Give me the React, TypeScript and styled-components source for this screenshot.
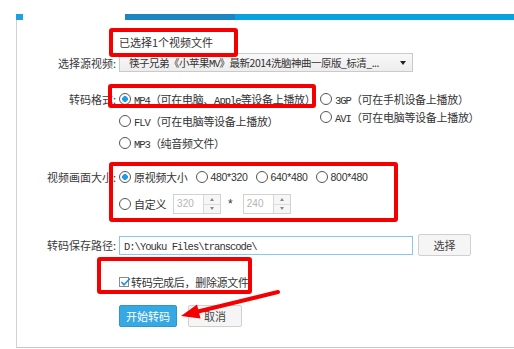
import styled, { createGlobalStyle } from "styled-components";

const GlobalStyle = createGlobalStyle`
  html, body {
    margin: 0;
    padding: 0;
    background: #fff;
  }
  body {
    font-family: "Noto Sans CJK SC", "Liberation Sans", sans-serif;
    font-size: 11px;
    color: #333;
  }
`;

const Page = styled.div`
  position: relative;
  width: 514px;
  height: 349px;
  padding: 14px 0 0 16px;
  box-sizing: border-box;
  overflow: hidden;
`;

const Panel = styled.div`
  height: 334px;
  border-left: 1px solid #cdd3d8;
  border-bottom: 1px solid #c6c6c6;
  box-sizing: border-box;
`;

const TopStrip = styled.div`
  display: flex;
  height: 6px;
`;

const Corner = styled.div`
  width: 7px;
  margin-left: -1px;
  background: #1da1e2;
`;

const Progress = styled.div`
  flex: 1;
  display: flex;
  margin-left: 102px;
  background: #08a2e0;
`;

const ProgressDone = styled.div`
  width: 110px;
  background: #1c86c2;
`;

const Row = styled.div<{ $top: number; $align?: string }>`
  display: flex;
  align-items: ${(p) => p.$align ?? "center"};
  margin-top: ${(p) => p.$top}px;
`;

const Label = styled.div<{ $lh?: number }>`
  width: 102px;
  flex-shrink: 0;
  padding-right: 3px;
  box-sizing: border-box;
  text-align: right;
  white-space: nowrap;
  line-height: ${(p) => p.$lh ?? 16}px;
  color: #3a3a3a;
`;

const Notice = styled.div`
  line-height: 16px;
  color: #333;
`;

const Mono = styled.span`
  font-family: "Liberation Mono", monospace;
  font-size: 10.5px;
  letter-spacing: -1px;
`;

const Select = styled.div`
  width: 294px;
  height: 19px;
  display: flex;
  align-items: center;
  padding: 0 6px 0 9px;
  box-sizing: border-box;
  border: 1px solid #cacaca;
  background: linear-gradient(#f8f8f8, #ededed);
  white-space: nowrap;
`;

const SelectText = styled.span`
  flex: 1;
  overflow: hidden;
  font-size: 10.5px;
  letter-spacing: -0.5px;
`;

const Caret = styled.span`
  width: 0;
  height: 0;
  border-left: 3.5px solid transparent;
  border-right: 3.5px solid transparent;
  border-top: 4px solid #222;
`;

const FormatGrid = styled.div`
  display: grid;
  grid-template-columns: 201px auto;
`;

const Column = styled.div<{ $offset?: number }>`
  display: flex;
  flex-direction: column;
  margin-top: ${(p) => p.$offset ?? 0}px;
`;

const Option = styled.label<{ $h?: number }>`
  display: flex;
  align-items: center;
  gap: 3px;
  height: ${(p) => p.$h ?? 22}px;
  white-space: nowrap;
  letter-spacing: -0.3px;
`;

const Radio = styled.span<{ $checked?: boolean }>`
  width: 12px;
  height: 12px;
  flex-shrink: 0;
  border-radius: 50%;
  border: 1px solid #555;
  box-sizing: border-box;
  background: ${(p) =>
    p.$checked
      ? "radial-gradient(circle, #1f9be6 0 2.6px, #fff 3.1px)"
      : "#fff"};
`;

const SizeBlock = styled.div`
  display: flex;
  flex-direction: column;
  gap: 7px;
`;

const SizeRow = styled.div<{ $gap: number }>`
  display: flex;
  align-items: center;
  height: 20px;
  gap: ${(p) => p.$gap}px;
`;

const Dim = styled.span`
  font-family: "Liberation Sans", sans-serif;
  font-size: 10.5px;
`;

const Spin = styled.div`
  display: flex;
  width: 48px;
  height: 20px;
  border: 1px solid #d2d2d2;
  box-sizing: border-box;
  background: #fff;
`;

const SpinValue = styled.div`
  flex: 1;
  padding-left: 3px;
  line-height: 18px;
  font-family: "Liberation Sans", sans-serif;
  font-size: 10px;
  color: #b4b4b4;
`;

const SpinButtons = styled.div`
  width: 16px;
  display: flex;
  flex-direction: column;
  border-left: 1px solid #d8d8d8;
`;

const SpinBtn = styled.div<{ $down?: boolean }>`
  flex: 1;
  display: flex;
  align-items: center;
  justify-content: center;
  background: #f6f6f6;
  & + & {
    border-top: 1px solid #dcdcdc;
  }
  &::before {
    content: "";
    border-left: 2.5px solid transparent;
    border-right: 2.5px solid transparent;
    ${(p) =>
      p.$down ? "border-top: 3px solid #888;" : "border-bottom: 3px solid #888;"}
  }
`;

const Times = styled.span`
  font-family: "Liberation Sans", sans-serif;
  font-size: 12px;
  margin-right: 3px;
`;

const PathInput = styled.div`
  width: 294px;
  height: 19px;
  padding-left: 4px;
  box-sizing: border-box;
  border: 1px solid #88c8ec;
  line-height: 17px;
  white-space: nowrap;
`;

const Button = styled.button<{ $primary?: boolean; $w: number }>`
  width: ${(p) => p.$w}px;
  height: 22px;
  padding: 0;
  border-radius: 2px;
  font-family: "Noto Sans CJK SC", sans-serif;
  font-size: 11px;
  border: 1px solid ${(p) => (p.$primary ? "#2c96d0" : "#d0d0d0")};
  background: ${(p) => (p.$primary ? "#38a8e2" : "#f5f5f5")};
  color: ${(p) => (p.$primary ? "#fff" : "#444")};
`;

const BrowseButton = styled(Button)`
  margin-left: 5px;
`;

const Actions = styled.div`
  display: flex;
  gap: 11px;
`;

const CheckLine = styled.label`
  display: flex;
  align-items: center;
  gap: 2px;
  height: 16px;
  letter-spacing: -0.3px;
`;

const CheckBox = styled.span`
  width: 10px;
  height: 10px;
  display: flex;
  border: 1px solid #8a8a8a;
  box-sizing: border-box;
  background: #fff;
  overflow: visible;
`;

const CheckMark = styled.svg`
  margin-top: -1px;
  flex-shrink: 0;
`;

const Annotation = styled.div<{ $x: number; $y: number; $w: number; $h: number }>`
  position: absolute;
  left: ${(p) => p.$x}px;
  top: ${(p) => p.$y}px;
  width: ${(p) => p.$w}px;
  height: ${(p) => p.$h}px;
  border: 4px solid #f50000;
  border-radius: 3px;
  box-sizing: border-box;
  pointer-events: none;
`;

const ArrowLayer = styled.svg`
  position: absolute;
  left: 0;
  top: 0;
  pointer-events: none;
`;

const App = () => {
  return (
    <Page>
      <GlobalStyle />
      <Panel>
        <TopStrip>
          <Corner />
          <Progress>
            <ProgressDone />
          </Progress>
        </TopStrip>

        <Row $top={14}>
          <Label />
          <Notice>已选择1个视频文件</Notice>
        </Row>

        <Row $top={3}>
          <Label>选择源视频:</Label>
          <Select>
            <SelectText>
              筷子兄弟《小苹果<Mono>MV</Mono>》最新2014洗脑神曲一原版_标清_...
            </SelectText>
            <Caret />
          </Select>
        </Row>

        <Row $top={16} $align="flex-start">
          <Label $lh={22}>转码格式:</Label>
          <FormatGrid>
            <Column>
              <Option>
                <Radio $checked />
                <span>
                  <Mono>MP4</Mono>（可在电脑、<Mono>Apple</Mono>等设备上播放）
                </span>
              </Option>
              <Option>
                <Radio />
                <span>
                  <Mono>FLV</Mono>（可在电脑等设备上播放）
                </span>
              </Option>
              <Option>
                <Radio />
                <span>
                  <Mono>MP3</Mono>（纯音频文件）
                </span>
              </Option>
            </Column>
            <Column $offset={2}>
              <Option $h={18}>
                <Radio />
                <span>
                  <Mono>3GP</Mono>（可在手机设备上播放）
                </span>
              </Option>
              <Option $h={18}>
                <Radio />
                <span>
                  <Mono>AVI</Mono>（可在电脑等设备上播放）
                </span>
              </Option>
            </Column>
          </FormatGrid>
        </Row>

        <Row $top={13} $align="flex-start">
          <Label $lh={20}>视频画面大小:</Label>
          <SizeBlock>
            <SizeRow $gap={8}>
              <Option $h={20}>
                <Radio $checked />
                原视频大小
              </Option>
              <Option $h={20}>
                <Radio />
                <Dim>480*320</Dim>
              </Option>
              <Option $h={20}>
                <Radio />
                <Dim>640*480</Dim>
              </Option>
              <Option $h={20}>
                <Radio />
                <Dim>800*480</Dim>
              </Option>
            </SizeRow>
            <SizeRow $gap={7}>
              <Option $h={20}>
                <Radio />
                自定义
              </Option>
              <Spin>
                <SpinValue>320</SpinValue>
                <SpinButtons>
                  <SpinBtn />
                  <SpinBtn $down />
                </SpinButtons>
              </Spin>
              <Times>*</Times>
              <Spin>
                <SpinValue>240</SpinValue>
                <SpinButtons>
                  <SpinBtn />
                  <SpinBtn $down />
                </SpinButtons>
              </Spin>
            </SizeRow>
          </SizeBlock>
        </Row>

        <Row $top={20}>
          <Label>转码保存路径:</Label>
          <PathInput>
            <Mono>D:\Youku Files\transcode\</Mono>
          </PathInput>
          <BrowseButton $w={53}>选择</BrowseButton>
        </Row>

        <Row $top={18}>
          <Label />
          <CheckLine>
            <CheckBox>
              <CheckMark width="12" height="10" viewBox="0 0 12 10">
                <path d="M1.5 5 L4 7.8 L10 1.5" fill="none" stroke="#1f8fe0" strokeWidth="1.6" />
              </CheckMark>
            </CheckBox>
            转码完成后，删除源文件
          </CheckLine>
        </Row>

        <Row $top={15}>
          <Label />
          <Actions>
            <Button $primary $w={58}>
              开始转码
            </Button>
            <Button $w={54}>取消</Button>
          </Actions>
        </Row>
      </Panel>

      <Annotation $x={109} $y={28} $w={129} $h={29} />
      <Annotation $x={108} $y={84} $w={208} $h={24} />
      <Annotation $x={109} $y={162} $w={289} $h={60} />
      <Annotation $x={97} $y={257} $w={155} $h={37} />

      <ArrowLayer width="514" height="349">
        <line x1="278" y1="292" x2="196" y2="312" stroke="#f50000" strokeWidth="4" strokeLinecap="round" />
        <polygon points="181,316 197,304.5 200.5,318.5" fill="#f50000" />
      </ArrowLayer>
    </Page>
  );
};

export default App;
